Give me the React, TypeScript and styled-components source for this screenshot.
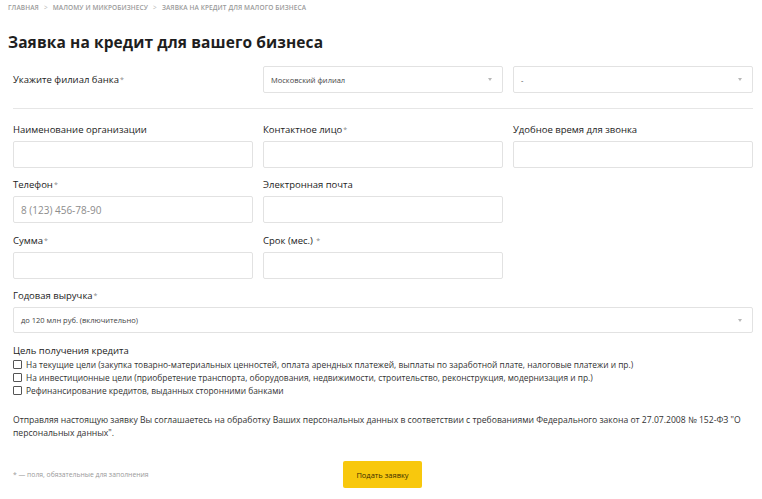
import React from "react";
import styled, { createGlobalStyle } from "styled-components";

const GlobalStyle = createGlobalStyle`
  body {
    margin: 0;
    background: #fff;
    font-family: "Open Sans", "Liberation Sans", Arial, sans-serif;
    color: #222;
  }
`;

const Page = styled.div`
  width: 762px;
  padding: 0 0 0 8px;
  box-sizing: border-box;
`;

const Breadcrumbs = styled.nav`
  display: flex;
  align-items: center;
  gap: 5px;
  height: 14px;
  font-size: 6.5px;
  font-weight: 600;
  text-transform: uppercase;
  color: #9a9a9a;
  letter-spacing: 0.1px;
`;

const Crumb = styled.span``;

const Sep = styled.span`
  color: #b5b5b5;
  font-weight: 400;
`;

const Title = styled.h1`
  margin: 19px 0 0;
  font-size: 15.5px;
  line-height: 18px;
  font-weight: 700;
  color: #1e1e1e;
  letter-spacing: 0.1px;
`;

const Form = styled.form`
  width: 740px;
  margin: 15px 0 0 5px;
  display: flex;
  flex-direction: column;
`;

const BranchRow = styled.div`
  display: grid;
  grid-template-columns: 240px 240px 240px;
  column-gap: 10px;
  align-items: center;
  padding-bottom: 15px;
  border-bottom: 1px solid #e6e6e6;
`;

const Grid = styled.div`
  display: grid;
  grid-template-columns: 240px 240px 240px;
  column-gap: 10px;
  row-gap: 10.4px;
  margin-top: 14px;
`;

const Field = styled.div<{ $span?: number }>`
  display: flex;
  flex-direction: column;
  gap: 4px;
  grid-column: span ${(p) => p.$span ?? 1};
`;

const Label = styled.label`
  font-size: 9.5px;
  line-height: 14px;
  color: #222;
`;

const Req = styled.span`
  color: #8a8a8a;
  font-size: 7px;
  vertical-align: top;
  margin-left: 1px;
`;

const Input = styled.div`
  height: 27px;
  box-sizing: border-box;
  border: 1px solid #e2e2e2;
  border-radius: 2px;
  padding: 0 7px;
  display: flex;
  align-items: center;
  font-size: 10px;
  color: #8c8c8c;
`;

const Select = styled.div<{ $h?: number }>`
  height: ${(p) => p.$h ?? 27}px;
  box-sizing: border-box;
  border: 1px solid #e2e2e2;
  border-radius: 2px;
  padding: 0 10px 0 7px;
  display: flex;
  align-items: center;
  justify-content: space-between;
  font-size: 7.5px;
  color: #444;
`;

const Arrow = styled.span`
  width: 0;
  height: 0;
  border-left: 2.5px solid transparent;
  border-right: 2.5px solid transparent;
  border-top: 3.5px solid #b8b8b8;
`;

const Purpose = styled.div`
  margin-top: 11px;
  display: flex;
  flex-direction: column;
`;

const PurposeTitle = styled.div`
  font-size: 9.5px;
  line-height: 14px;
  color: #222;
`;

const Check = styled.label`
  display: flex;
  align-items: center;
  gap: 4px;
  font-size: 8.4px;
  line-height: 13px;
  color: #333;
`;

const Box = styled.span`
  width: 7px;
  height: 7px;
  border: 1px solid #555;
  border-radius: 1px;
  flex: none;
`;

const Consent = styled.p`
  margin: 17px 0 0;
  font-size: 8.6px;
  line-height: 13px;
  color: #333;
`;

const Footer = styled.div`
  margin-top: 21px;
  display: flex;
  align-items: center;
`;

const Note = styled.span`
  width: 330px;
  font-size: 6.8px;
  color: #999;
`;

const Submit = styled.button`
  width: 79px;
  height: 27px;
  border: none;
  border-radius: 2px;
  background: #f8c80d;
  font-family: inherit;
  font-size: 7.5px;
  color: #3a2e00;
  cursor: pointer;
`;

const fields = [
  { label: "Наименование организации", req: false },
  { label: "Контактное лицо", req: true },
  { label: "Удобное время для звонка", req: false },
  { label: "Телефон", req: true, value: "8 (123) 456-78-90" },
  { label: "Электронная почта", req: false },
  null,
  { label: "Сумма", req: true },
  { label: "Срок (мес.) ", req: true },
  null,
];

const purposes = [
  "На текущие цели (закупка товарно-материальных ценностей, оплата арендных платежей, выплаты по заработной плате, налоговые платежи и пр.)",
  "На инвестиционные цели (приобретение транспорта, оборудования, недвижимости, строительство, реконструкция, модернизация и пр.)",
  "Рефинансирование кредитов, выданных сторонними банками",
];

export default function App() {
  return (
    <Page>
      <GlobalStyle />
      <Breadcrumbs>
        <Crumb>Главная</Crumb>
        <Sep>&gt;</Sep>
        <Crumb>Малому и микробизнесу</Crumb>
        <Sep>&gt;</Sep>
        <Crumb>Заявка на кредит для малого бизнеса</Crumb>
      </Breadcrumbs>
      <Title>Заявка на кредит для вашего бизнеса</Title>
      <Form>
        <BranchRow>
          <Label>
            Укажите филиал банка<Req>*</Req>
          </Label>
          <Select>
            Московский филиал
            <Arrow />
          </Select>
          <Select>
            -
            <Arrow />
          </Select>
        </BranchRow>
        <Grid>
          {fields.map((f, i) =>
            f ? (
              <Field key={i}>
                <Label>
                  {f.label}
                  {f.req && <Req>*</Req>}
                </Label>
                <Input>{f.value}</Input>
              </Field>
            ) : (
              <div key={i} />
            )
          )}
          <Field $span={3}>
            <Label>
              Годовая выручка<Req>*</Req>
            </Label>
            <Select $h={26}>
              до 120 млн руб. (включительно)
              <Arrow />
            </Select>
          </Field>
        </Grid>
        <Purpose>
          <PurposeTitle>Цель получения кредита</PurposeTitle>
          {purposes.map((p) => (
            <Check key={p}>
              <Box />
              {p}
            </Check>
          ))}
        </Purpose>
        <Consent>
          Отправляя настоящую заявку Вы соглашаетесь на обработку Ваших персональных данных в
          соответствии с требованиями Федерального закона от 27.07.2008 № 152-ФЗ "О персональных
          данных".
        </Consent>
        <Footer>
          <Note>* — поля, обязательные для заполнения</Note>
          <Submit type="button">Подать заявку</Submit>
        </Footer>
      </Form>
    </Page>
  );
}
